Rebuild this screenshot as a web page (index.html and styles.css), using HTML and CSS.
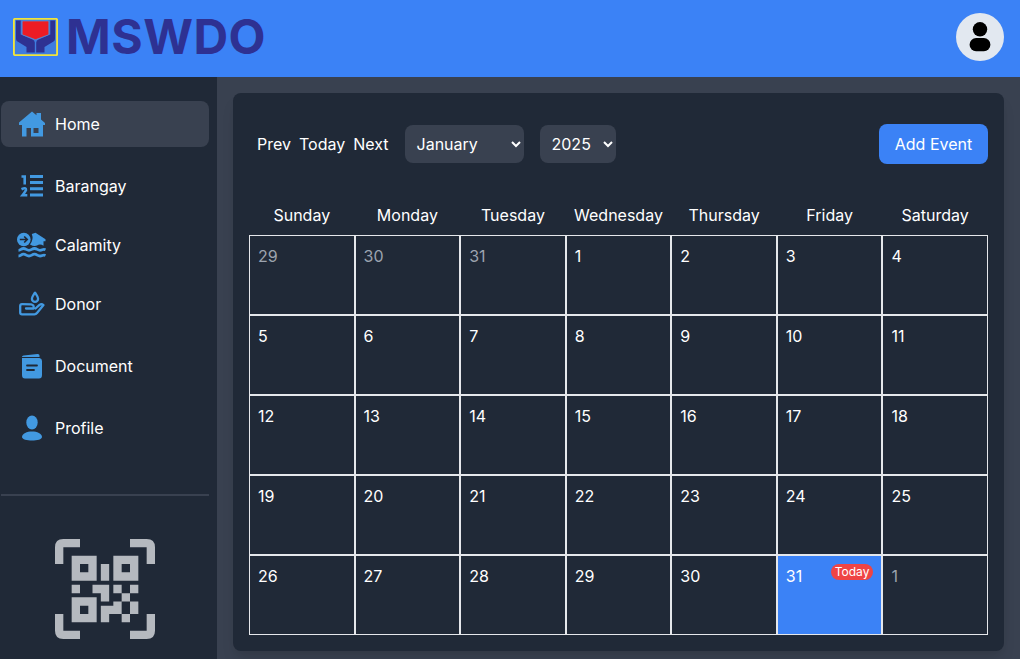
FILE: index.html
```html
<!DOCTYPE html>
<html lang="en">
<head>
<meta charset="utf-8">
<title>MSWDO Calendar</title>
<link rel="stylesheet" href="styles.css">
</head>
<body>
<header class="topbar">
  <div class="brand">
    <svg class="brand-logo" viewBox="0 0 45 38">
      <rect x=".9" y=".9" width="43.2" height="36.2" rx="1" fill="#3f7de0" stroke="#f1e43b" stroke-width="1.9"/>
      <path d="M3 2.500H7.700V16.500L19 21.300Q21.800 22.300 21.800 24.500V34.500H13.500V29L4.500 23.500Q3 22.500 3 21Z" fill="#2e3192"/>
      <path d="M42 2.500H37.300V16.500L26 21.300Q23.200 22.300 23.200 24.500V34.500H31.500V29L40.500 23.500Q42 22.500 42 21Z" fill="#2e3192"/>
      <path d="M10.200 3H34.800Q35.800 3 35.800 4V15.500Q35.800 16.500 34.800 17L23.500 21.300Q22.500 21.700 21.500 21.300L10.200 17Q9.200 16.500 9.200 15.500V4Q9.200 3 10.200 3Z" fill="#ed1c24" stroke="#5d8ccc" stroke-width=".7"/>
    </svg>
    <span class="brand-name">MSWDO</span>
  </div>
  <div class="avatar">
    <svg width="22" height="30" viewBox="0 0 22 30"><circle cx="11" cy="7.300" r="7.200"/><rect x=".6" y="16" width="20.800" height="13.200" rx="6.500"/></svg>
  </div>
</header>
<div class="layout">
  <aside class="sidebar">
    <nav class="menu">
      <a class="item active"><svg class="icon" viewBox="0 0 30 30"><path d="M2 13.500L15 2.500L19.500 6.300V4H24V10.500L28 14V16H26V27.500H5V16H2ZM9.500 19V27.500H14V19ZM16.500 19V24H21.500V19Z" fill-rule="evenodd"/></svg>Home</a>
      <a class="item"><svg class="icon" viewBox="0 0 30 30"><path d="M13 4H26V7H13ZM13 10H26V13H13ZM13 16.300H26V19.300H13ZM13 22.500H26V25.500H13Z"/><path d="M4.500 5.500H7.700V13.500M4.500 18.200Q9.300 16 9 19Q8.800 20 5.500 24.200H10.300" fill="none" stroke="#4299e1" stroke-width="2.600"/></svg>Barangay</a>
      <a class="item short"><svg class="icon" viewBox="0 0 30 30"><circle cx="6.800" cy="9.500" r="6.800"/><path d="M2.800 9.500H10M7.200 6.500L10.200 9.500L7.200 12.500" fill="none" stroke="#202937" stroke-width="1.700"/><path d="M14.800 4L18.500 2.700L28.500 9.200V11.200H26.500V15.800Q23 13.500 20 15.600Q17 17 13 14.400Q17 9.500 14.800 4Z"/><path d="M1.500 20.300C4 20.300 4 18.500 6.500 18.500S9.500 20.300 12 20.300S15 18.500 17.500 18.500S20.500 20.300 23 20.300S26 18.500 28.500 19.700M1.500 26C4 26 4 24.200 6.500 24.200S9.500 26 12 26S15 24.200 17.500 24.200S20.500 26 23 26S26 24.200 28.500 25.400" fill="none" stroke="#4299e1" stroke-width="2.800"/></svg>Calamity</a>
      <a class="item short"><svg class="icon" viewBox="0 0 30 30"><g fill="none" stroke="#4299e1" stroke-width="2.300" stroke-linejoin="round" stroke-linecap="round"><path d="M18 3.700C16.500 6 14.900 7.600 14.900 9.800A3.100 3.100 0 0 0 21.100 9.800C21.100 7.600 19.500 6 18 3.700Z"/><path d="M9 19.500H16.500Q17.500 16 14 15.300L5 15.200Q3.200 15.200 3.200 17V23.500Q3.200 25.300 5 25.300H17.500Q19 25.300 20 24.100L26.500 16.100Q24.500 14.500 22.500 15.900L18.500 19.500"/></g></svg>Donor</a>
      <a class="item"><svg class="icon" viewBox="0 0 30 30"><path d="M5 5.800Q5 4.800 6.500 4.600L20.500 3Q22.500 2.800 22.500 4.600V6H5ZM5 7H22.500Q25 7.500 25 10V24Q25 27.500 22 27.500H8Q5 27.500 5 24Z"/><path d="M10 14.500H20M10 19H17" fill="none" stroke="#202937" stroke-width="1.800" stroke-linecap="round"/></svg>Document</a>
      <a class="item"><svg class="icon" viewBox="0 0 30 30"><ellipse cx="15" cy="9.500" rx="5.700" ry="7"/><path d="M5 24C5 16.500 25 16.500 25 24C25 28.800 5 28.800 5 24Z"/></svg>Profile</a>
    </nav>
    <hr class="divider">
    <svg class="qr" viewBox="0 0 24 24">
      <path d="M6 0V2H2V6H0V2Q0 0 2 0ZM18 0H22Q24 0 24 2V6H22V2H18ZM0 18H2V22H6V24H2Q0 24 0 22ZM22 18H24V22Q24 24 22 24H18V22H22Z"/>
      <path fill-rule="evenodd" d="M4 4H10V10H4ZM6 6V8H8V6ZM14 4H20V10H14ZM16 6V8H18V6ZM4 14H10V20H4ZM6 16V18H8V16Z"/>
      <path d="M11 6H13V10H11ZM4 11H6V13H4ZM9 11H13V15H11V13H9ZM14 11H16V13H14ZM18 11H20V13H18ZM16 13H18V15H16ZM14 15H16V18H13V20H11V16H14ZM18 15H20V18H18ZM16 18H18V20H16Z"/>
    </svg>
  </aside>
  <main class="content">
    <section class="card">
      <div class="toolbar">
        <div class="controls">
          <button class="link">Prev</button><button class="link">Today</button><button class="link">Next</button>
          <div class="select month">January<svg class="chevron" viewBox="0 0 10 7"><path d="M1 1L5 5L9 1"/></svg></div>
          <div class="select year">2025<svg class="chevron" viewBox="0 0 10 7"><path d="M1 1L5 5L9 1"/></svg></div>
        </div>
        <button class="add">Add Event</button>
      </div>
      <div class="week"><span>Sunday</span><span>Monday</span><span>Tuesday</span><span>Wednesday</span><span>Thursday</span><span>Friday</span><span>Saturday</span></div>
      <div class="days">
        <div class="day muted">29</div><div class="day muted">30</div><div class="day muted">31</div><div class="day">1</div><div class="day">2</div><div class="day">3</div><div class="day">4</div>
        <div class="day">5</div><div class="day">6</div><div class="day">7</div><div class="day">8</div><div class="day">9</div><div class="day">10</div><div class="day">11</div>
        <div class="day">12</div><div class="day">13</div><div class="day">14</div><div class="day">15</div><div class="day">16</div><div class="day">17</div><div class="day">18</div>
        <div class="day">19</div><div class="day">20</div><div class="day">21</div><div class="day">22</div><div class="day">23</div><div class="day">24</div><div class="day">25</div>
        <div class="day">26</div><div class="day">27</div><div class="day">28</div><div class="day">29</div><div class="day">30</div><div class="day today">31<span class="badge">Today</span></div><div class="day muted">1</div>
      </div>
    </section>
  </main>
</div>
</body>
</html>
```
FILE: styles.css
```css
* { box-sizing: border-box; }
body {
  margin: 0;
  height: 659px;
  overflow: hidden;
  display: flex;
  flex-direction: column;
  background: #394150;
  color: #fff;
  font: 16px/24px Inter, "Liberation Sans", sans-serif;
}
button { font: inherit; color: inherit; border: 0; padding: 0; background: none; }
.topbar {
  height: 77px;
  flex: none;
  display: flex;
  align-items: center;
  justify-content: space-between;
  padding: 0 16px 3px 13px;
  background: #3b82f6;
}
.brand { display: flex; align-items: center; gap: 8px; }
.brand-logo { width: 45px; height: 38px; }
.brand-name { font-size: 48px; line-height: 48px; font-weight: 700; letter-spacing: .5px; color: #2e3192; }
.avatar {
  width: 48px;
  height: 48px;
  border-radius: 50%;
  background: #e2e8f0;
  display: flex;
  align-items: center;
  justify-content: center;
}
.layout { flex: 1; display: flex; min-height: 0; }
.sidebar { width: 217px; flex: none; background: #202937; padding: 24px 8px 0 1px; }
.menu { display: flex; flex-direction: column; gap: 16px; }
.item {
  height: 46px;
  display: flex;
  align-items: center;
  gap: 8px;
  padding-left: 16px;
  border-radius: 8px;
}
.item.short { height: 43px; padding-bottom: 4px; }
.item.active { background: #394150; }
.icon { width: 30px; height: 30px; fill: #4299e1; }
.divider { margin: 43px 0; border: 0; height: 2px; background: #394150; }
.qr { display: block; width: 100px; height: 100px; margin-left: 54px; fill: #b5b9bf; }
.content { flex: 1; padding: 16px 16px 8px; }
.card {
  height: 558px;
  border-radius: 8px;
  padding: 16px;
  background: #202937;
  box-shadow: 0 10px 15px -3px rgba(0, 0, 0, .1), 0 4px 6px -2px rgba(0, 0, 0, .05);
}
.toolbar {
  height: 70px;
  display: flex;
  align-items: center;
  justify-content: space-between;
  padding-left: 8px;
}
.controls { display: flex; align-items: center; gap: 8px; }
.select {
  height: 38px;
  margin-left: 8px;
  padding: 0 3px 0 12px;
  display: flex;
  align-items: center;
  justify-content: space-between;
  border-radius: 8px;
  background: #394150;
}
.month { width: 119px; }
.year { width: 76px; }
.chevron { width: 10px; height: 7px; fill: none; stroke: #fff; stroke-width: 2; }
.add { width: 109px; height: 40px; border-radius: 8px; background: #3b82f6; }
.week { display: grid; grid-template-columns: repeat(7, 1fr); text-align: center; padding: 24px 0 8px; }
.days { display: grid; grid-template-columns: repeat(7, 1fr); grid-auto-rows: 80px; }
.day { position: relative; border: 1px solid #e5e7eb; padding: 8px; }
.muted { color: #9ca3af; }
.today { background: #3b82f6; }
.badge {
  position: absolute;
  top: 8px;
  right: 8px;
  padding: 0 4px;
  border-radius: 8px;
  background: #ef4444;
  font-size: 12px;
  line-height: 16px;
}
```
